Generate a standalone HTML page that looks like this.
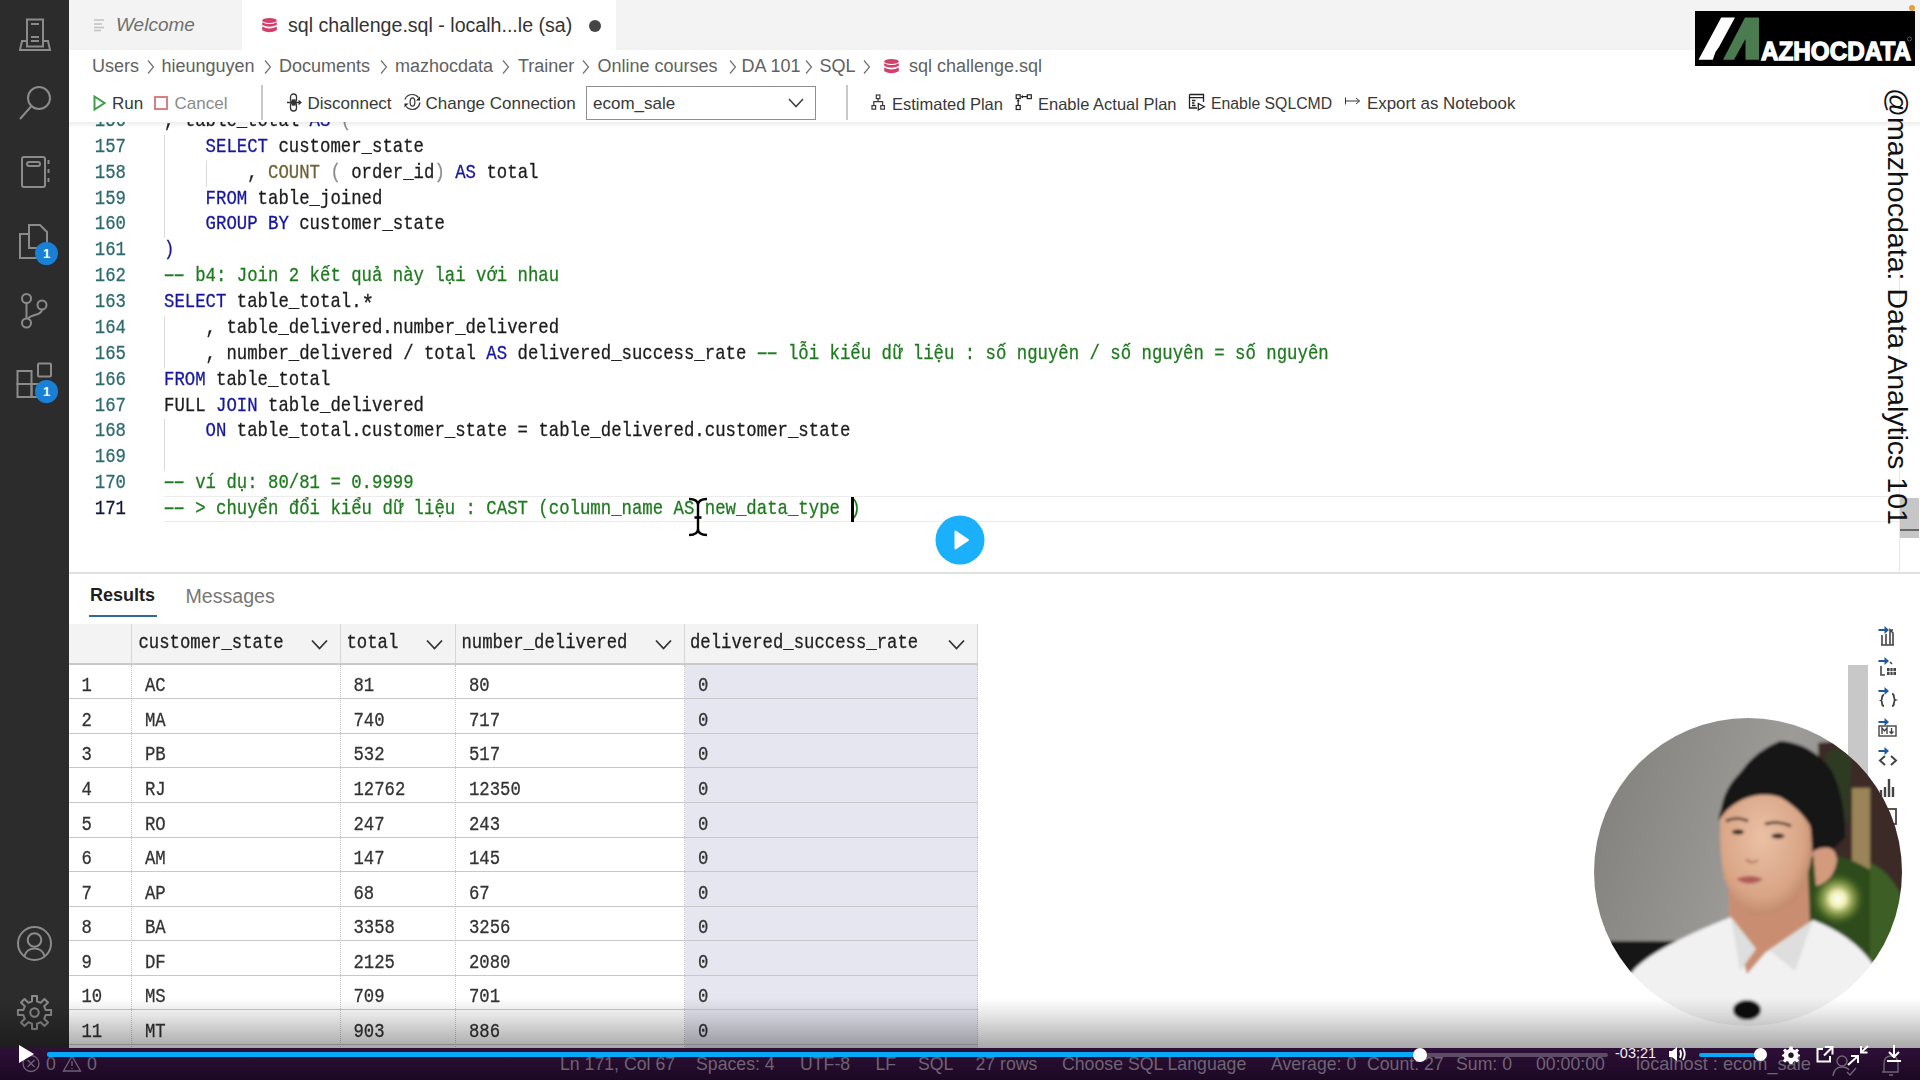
<!DOCTYPE html>
<html><head><meta charset="utf-8"><title>sql challenge</title>
<style>
*{box-sizing:border-box;margin:0;padding:0}
html,body{width:1920px;height:1080px;overflow:hidden;background:#fff}
body{position:relative;font-family:"Liberation Sans", sans-serif}
.a{position:absolute;white-space:pre}
.mono{font-family:"Liberation Mono", monospace;transform:scaleY(1.12);-webkit-text-stroke:0.25px currentColor}
.kw{color:#1616a0}
.fn{color:#6e6238}
.cm{color:#1f7a1f}
.tx{color:#1c1c1c}
.pg{color:#8c8c8c}
.dsh{display:inline-block;transform:scaleX(1.75)}
.ast{color:#1c1c1c;position:relative;top:4px;font-size:21px;line-height:1px}
</style></head><body>

<div class="a" style="left:0;top:0;width:69px;height:1048px;background:#2c2c2c"></div>
<svg class="a" style="left:0;top:0" width="69" height="1048" viewBox="0 0 69 1048" fill="none" stroke="#8b8b8b" stroke-width="2">
<!-- server -->
<rect x="27" y="19.5" width="16" height="27" />
<line x1="31" y1="24" x2="39" y2="24"/>
<line x1="31" y1="37" x2="39" y2="37"/>
<line x1="31" y1="41" x2="39" y2="41"/>
<path d="M27 41 H22 L20 50 H50 L48 41 H43"/>
<!-- search -->
<circle cx="39" cy="98" r="11"/>
<line x1="31.5" y1="106" x2="20" y2="119"/>
<!-- notebook -->
<rect x="22" y="157" width="23" height="30" rx="2"/>
<rect x="27" y="162" width="13" height="4" rx="2"/>
<line x1="48.5" y1="160" x2="48.5" y2="164"/>
<line x1="48.5" y1="169" x2="48.5" y2="173"/>
<line x1="48.5" y1="178" x2="48.5" y2="182"/>
<!-- files -->
<path d="M29 225 H40 L47 232 V248 H29 Z"/>
<path d="M29 234 H20 V258 H38 V248"/>
<!-- git -->
<circle cx="26.5" cy="298.5" r="4.5"/>
<circle cx="26.5" cy="323" r="4.5"/>
<circle cx="42" cy="305" r="4.5"/>
<line x1="26.5" y1="303" x2="26.5" y2="318.5"/>
<path d="M42 309.5 C42 316 30 314 28 319"/>
<!-- extensions -->
<rect x="17.5" y="371" width="14" height="13"/>
<rect x="17.5" y="384" width="14" height="13"/>
<rect x="31.5" y="384" width="14" height="13"/>
<rect x="38" y="363.5" width="13" height="13" rx="1"/>
<!-- account -->
<circle cx="34.5" cy="943.5" r="16.5"/>
<circle cx="34.5" cy="940" r="6.8"/>
<path d="M24.5 956 C27 946 42 946 44.5 956"/>
</svg>
<div class="a" style="left:35px;top:242.0px;width:23px;height:23px;border-radius:50%;background:#1a80d6;color:#fff;font:bold 13px 'Liberation Sans', sans-serif;text-align:center;line-height:23px">1</div>
<div class="a" style="left:35px;top:379.5px;width:23px;height:23px;border-radius:50%;background:#1a80d6;color:#fff;font:bold 13px 'Liberation Sans', sans-serif;text-align:center;line-height:23px">1</div>
<svg class="a" style="left:16px;top:994px" width="37" height="37" viewBox="0 0 37 37" fill="none" stroke="#8b8b8b" stroke-width="2" stroke-linejoin="round">
<path d="M16.01 7.27 L16.02 1.88 L20.98 1.88 L20.99 7.27 L24.68 8.80 L28.49 5.00 L32.00 8.51 L28.20 12.32 L29.73 16.01 L35.12 16.02 L35.12 20.98 L29.73 20.99 L28.20 24.68 L32.00 28.49 L28.49 32.00 L24.68 28.20 L20.99 29.73 L20.98 35.12 L16.02 35.12 L16.01 29.73 L12.32 28.20 L8.51 32.00 L5.00 28.49 L8.80 24.68 L7.27 20.99 L1.88 20.98 L1.88 16.02 L7.27 16.01 L8.80 12.32 L5.00 8.51 L8.51 5.00 L12.32 8.80 Z"/>
<circle cx="18.5" cy="18.5" r="4.2"/>
</svg>
<div class="a" style="left:164px;top:496px;width:1736px;height:26px;border-top:1.5px solid #ececec;border-bottom:1.5px solid #ececec"></div>
<div class="a" style="left:164px;top:134.82px;width:1px;height:103.48px;background:#d9d9d9"></div>
<div class="a" style="left:206px;top:160.69px;width:1px;height:25.87px;background:#d9d9d9"></div>
<div class="a" style="left:164px;top:315.90999999999997px;width:1px;height:51.74px;background:#d9d9d9"></div>
<div class="a" style="left:164px;top:419.39px;width:1px;height:51.74px;background:#d9d9d9"></div>
<div class="a mono" style="left:86px;top:108.94999999999999px;width:40px;text-align:right;font-size:17.33px;line-height:25.87px;color:#2e6a70">156</div>
<div class="a mono" style="left:164px;top:108.94999999999999px;font-size:17.33px;line-height:25.87px"><span class="tx">, table_total </span><span class="kw">AS</span><span class="tx"> </span><span class="pg">(</span></div>
<div class="a mono" style="left:86px;top:134.82px;width:40px;text-align:right;font-size:17.33px;line-height:25.87px;color:#2e6a70">157</div>
<div class="a mono" style="left:164px;top:134.82px;font-size:17.33px;line-height:25.87px"><span class="tx">    </span><span class="kw">SELECT</span><span class="tx"> customer_state</span></div>
<div class="a mono" style="left:86px;top:160.69px;width:40px;text-align:right;font-size:17.33px;line-height:25.87px;color:#2e6a70">158</div>
<div class="a mono" style="left:164px;top:160.69px;font-size:17.33px;line-height:25.87px"><span class="tx">        , </span><span class="fn">COUNT</span><span class="tx"> </span><span class="pg">(</span><span class="tx"> order_id</span><span class="pg">)</span><span class="tx"> </span><span class="kw">AS</span><span class="tx"> total</span></div>
<div class="a mono" style="left:86px;top:186.56px;width:40px;text-align:right;font-size:17.33px;line-height:25.87px;color:#2e6a70">159</div>
<div class="a mono" style="left:164px;top:186.56px;font-size:17.33px;line-height:25.87px"><span class="tx">    </span><span class="kw">FROM</span><span class="tx"> table_joined</span></div>
<div class="a mono" style="left:86px;top:212.43px;width:40px;text-align:right;font-size:17.33px;line-height:25.87px;color:#2e6a70">160</div>
<div class="a mono" style="left:164px;top:212.43px;font-size:17.33px;line-height:25.87px"><span class="tx">    </span><span class="kw">GROUP BY</span><span class="tx"> customer_state</span></div>
<div class="a mono" style="left:86px;top:238.3px;width:40px;text-align:right;font-size:17.33px;line-height:25.87px;color:#2e6a70">161</div>
<div class="a mono" style="left:164px;top:238.3px;font-size:17.33px;line-height:25.87px"><span class="kw">)</span></div>
<div class="a mono" style="left:86px;top:264.16999999999996px;width:40px;text-align:right;font-size:17.33px;line-height:25.87px;color:#2e6a70">162</div>
<div class="a mono" style="left:164px;top:264.16999999999996px;font-size:17.33px;line-height:25.87px"><span class="cm"><span class="dsh">-</span><span class="dsh">-</span> b4: Join 2 kết quả này lại với nhau</span></div>
<div class="a mono" style="left:86px;top:290.03999999999996px;width:40px;text-align:right;font-size:17.33px;line-height:25.87px;color:#2e6a70">163</div>
<div class="a mono" style="left:164px;top:290.03999999999996px;font-size:17.33px;line-height:25.87px"><span class="kw">SELECT</span><span class="tx"> table_total.</span><span class="ast">*</span></div>
<div class="a mono" style="left:86px;top:315.90999999999997px;width:40px;text-align:right;font-size:17.33px;line-height:25.87px;color:#2e6a70">164</div>
<div class="a mono" style="left:164px;top:315.90999999999997px;font-size:17.33px;line-height:25.87px"><span class="tx">    , table_delivered.number_delivered</span></div>
<div class="a mono" style="left:86px;top:341.78px;width:40px;text-align:right;font-size:17.33px;line-height:25.87px;color:#2e6a70">165</div>
<div class="a mono" style="left:164px;top:341.78px;font-size:17.33px;line-height:25.87px"><span class="tx">    , number_delivered / total </span><span class="kw">AS</span><span class="tx"> delivered_success_rate </span><span class="cm"><span class="dsh">-</span><span class="dsh">-</span> lỗi kiểu dữ liệu : số nguyên / số nguyên = số nguyên</span></div>
<div class="a mono" style="left:86px;top:367.65px;width:40px;text-align:right;font-size:17.33px;line-height:25.87px;color:#2e6a70">166</div>
<div class="a mono" style="left:164px;top:367.65px;font-size:17.33px;line-height:25.87px"><span class="kw">FROM</span><span class="tx"> table_total</span></div>
<div class="a mono" style="left:86px;top:393.52px;width:40px;text-align:right;font-size:17.33px;line-height:25.87px;color:#2e6a70">167</div>
<div class="a mono" style="left:164px;top:393.52px;font-size:17.33px;line-height:25.87px"><span class="tx">FULL </span><span class="kw">JOIN</span><span class="tx"> table_delivered</span></div>
<div class="a mono" style="left:86px;top:419.39px;width:40px;text-align:right;font-size:17.33px;line-height:25.87px;color:#2e6a70">168</div>
<div class="a mono" style="left:164px;top:419.39px;font-size:17.33px;line-height:25.87px"><span class="tx">    </span><span class="kw">ON</span><span class="tx"> table_total.customer_state = table_delivered.customer_state</span></div>
<div class="a mono" style="left:86px;top:445.26px;width:40px;text-align:right;font-size:17.33px;line-height:25.87px;color:#2e6a70">169</div>
<div class="a mono" style="left:164px;top:445.26px;font-size:17.33px;line-height:25.87px"></div>
<div class="a mono" style="left:86px;top:471.13px;width:40px;text-align:right;font-size:17.33px;line-height:25.87px;color:#2e6a70">170</div>
<div class="a mono" style="left:164px;top:471.13px;font-size:17.33px;line-height:25.87px"><span class="cm"><span class="dsh">-</span><span class="dsh">-</span> ví dụ: 80/81 = 0.9999</span></div>
<div class="a mono" style="left:86px;top:497.0px;width:40px;text-align:right;font-size:17.33px;line-height:25.87px;color:#101838">171</div>
<div class="a mono" style="left:164px;top:497.0px;font-size:17.33px;line-height:25.87px"><span class="cm"><span class="dsh">-</span><span class="dsh">-</span> &gt; chuyển đổi kiểu dữ liệu : CAST (column_name AS new_data_type )</span></div>
<div class="a" style="left:851px;top:496.5px;width:2.5px;height:25px;background:#000"></div>
<svg class="a" style="left:686px;top:496px" width="24" height="42" viewBox="0 0 24 42" fill="none" stroke="#000" stroke-width="2.4"><path d="M3 3 Q12 3 12 9 V33 Q12 39 3 39 M21 3 Q12 3 12 9 M12 33 Q12 39 21 39 M8.5 21.5 H15.5"/></svg>
<div class="a" style="left:69px;top:50px;width:1851px;height:72px;background:#fff"></div>
<div class="a" style="left:69px;top:0;width:1851px;height:50px;background:#f3f3f3"></div>
<div class="a" style="left:242px;top:0;width:374px;height:50px;background:#ffffff"></div>
<svg class="a" style="left:92px;top:18px" width="14" height="14" viewBox="0 0 14 14" stroke="#c4c4c4" stroke-width="1.6">
<line x1="2" y1="2" x2="12" y2="2"/><line x1="2" y1="6" x2="10" y2="6"/><line x1="2" y1="9.5" x2="12" y2="9.5"/><line x1="2" y1="12.5" x2="9" y2="12.5"/></svg>
<div class="a" style="left:116px;top:13px;font:italic 19px 'Liberation Sans', sans-serif;color:#6f6f6f;line-height:24px">Welcome</div>
<svg class="a" style="left:261.5px;top:17.5px" width="15" height="15" viewBox="0 0 15 15"><ellipse cx="7.5" cy="2.6" rx="7.3" ry="2.5" fill="#d23f6c"/><path d="M0.2 4.2 Q7.5 8 14.8 4.2 V7 Q7.5 10.6 0.2 7 Z" fill="#d23f6c"/><path d="M0.2 8.6 Q7.5 12.3 14.8 8.6 V12.2 Q7.5 16.2 0.2 12.2 Z" fill="#d23f6c"/></svg>
<div class="a" style="left:288px;top:13px;font:19.6px 'Liberation Sans', sans-serif;color:#333;line-height:24px">sql challenge.sql - localh...le (sa)</div>
<div class="a" style="left:589px;top:19.5px;width:12px;height:12px;border-radius:50%;background:#444"></div>
<div class="a" style="left:92px;top:55px;font:18px 'Liberation Sans', sans-serif;color:#616161;line-height:22px">Users</div>
<div class="a" style="left:161.5px;top:55px;font:18px 'Liberation Sans', sans-serif;color:#616161;line-height:22px">hieunguyen</div>
<div class="a" style="left:279px;top:55px;font:18px 'Liberation Sans', sans-serif;color:#616161;line-height:22px">Documents</div>
<div class="a" style="left:395px;top:55px;font:18px 'Liberation Sans', sans-serif;color:#616161;line-height:22px">mazhocdata</div>
<div class="a" style="left:518px;top:55px;font:18px 'Liberation Sans', sans-serif;color:#616161;line-height:22px">Trainer</div>
<div class="a" style="left:597.5px;top:55px;font:18px 'Liberation Sans', sans-serif;color:#616161;line-height:22px">Online courses</div>
<div class="a" style="left:741.5px;top:55px;font:18px 'Liberation Sans', sans-serif;color:#616161;line-height:22px">DA 101</div>
<div class="a" style="left:819.5px;top:55px;font:18px 'Liberation Sans', sans-serif;color:#616161;line-height:22px">SQL</div>
<div class="a" style="left:909px;top:55px;font:18px 'Liberation Sans', sans-serif;color:#616161;line-height:22px">sql challenge.sql</div>
<svg class="a" style="left:147.0px;top:59px" width="8" height="16" viewBox="0 0 8 16"><path d="M1 1.5 L6.5 8 L1 14.5" fill="none" stroke="#707070" stroke-width="1.2"/></svg>
<svg class="a" style="left:264.0px;top:59px" width="8" height="16" viewBox="0 0 8 16"><path d="M1 1.5 L6.5 8 L1 14.5" fill="none" stroke="#707070" stroke-width="1.2"/></svg>
<svg class="a" style="left:379.5px;top:59px" width="8" height="16" viewBox="0 0 8 16"><path d="M1 1.5 L6.5 8 L1 14.5" fill="none" stroke="#707070" stroke-width="1.2"/></svg>
<svg class="a" style="left:502.0px;top:59px" width="8" height="16" viewBox="0 0 8 16"><path d="M1 1.5 L6.5 8 L1 14.5" fill="none" stroke="#707070" stroke-width="1.2"/></svg>
<svg class="a" style="left:581.5px;top:59px" width="8" height="16" viewBox="0 0 8 16"><path d="M1 1.5 L6.5 8 L1 14.5" fill="none" stroke="#707070" stroke-width="1.2"/></svg>
<svg class="a" style="left:728.5px;top:59px" width="8" height="16" viewBox="0 0 8 16"><path d="M1 1.5 L6.5 8 L1 14.5" fill="none" stroke="#707070" stroke-width="1.2"/></svg>
<svg class="a" style="left:804.5px;top:59px" width="8" height="16" viewBox="0 0 8 16"><path d="M1 1.5 L6.5 8 L1 14.5" fill="none" stroke="#707070" stroke-width="1.2"/></svg>
<svg class="a" style="left:862.5px;top:59px" width="8" height="16" viewBox="0 0 8 16"><path d="M1 1.5 L6.5 8 L1 14.5" fill="none" stroke="#707070" stroke-width="1.2"/></svg>
<svg class="a" style="left:883.5px;top:58.5px" width="15" height="15" viewBox="0 0 15 15"><ellipse cx="7.5" cy="2.6" rx="7.3" ry="2.5" fill="#d23f6c"/><path d="M0.2 4.2 Q7.5 8 14.8 4.2 V7 Q7.5 10.6 0.2 7 Z" fill="#d23f6c"/><path d="M0.2 8.6 Q7.5 12.3 14.8 8.6 V12.2 Q7.5 16.2 0.2 12.2 Z" fill="#d23f6c"/></svg>
<div class="a" style="left:69px;top:122px;width:1851px;height:6px;background:linear-gradient(rgba(0,0,0,0.07),rgba(0,0,0,0))"></div>
<svg class="a" style="left:93px;top:95px" width="13" height="16" viewBox="0 0 13 16"><path d="M1.5 1.5 L11.5 8 L1.5 14.5 Z" fill="none" stroke="#3aa04a" stroke-width="2"/></svg>
<div class="a" style="left:112px;top:94px;font:17px 'Liberation Sans', sans-serif;color:#383838;line-height:20px">Run</div>
<div class="a" style="left:154px;top:95.5px;width:14px;height:14px;border:2px solid #d98080"></div>
<div class="a" style="left:174.5px;top:94px;font:17px 'Liberation Sans', sans-serif;color:#8a8a8a;line-height:20px">Cancel</div>
<div class="a" style="left:261px;top:85px;width:1.5px;height:35px;background:#c8c8c8"></div>
<svg class="a" style="left:286px;top:93px" width="16" height="20" viewBox="0 0 16 20" fill="none" stroke="#333" stroke-width="1.3"><rect x="4.5" y="1" width="6" height="8.5" rx="3"/><rect x="4.5" y="9.5" width="6" height="8.5" rx="3"/><path d="M1 9.5 H15 M12.5 7.5 L15 9.5 L12.5 11.5"/><rect x="6.5" y="7" width="2.5" height="5" fill="#333"/></svg>
<div class="a" style="left:307.5px;top:94px;font:17px 'Liberation Sans', sans-serif;color:#383838;line-height:20px">Disconnect</div>
<svg class="a" style="left:403px;top:93px" width="19" height="18" viewBox="0 0 19 18" fill="none" stroke="#333" stroke-width="1.2"><path d="M1.8 6.5 Q4 1.5 9.5 1.5 Q13 1.5 15.5 4.5 M17 9.5 Q15.5 16.5 9.5 16.5 Q5.5 16.5 3.2 13.5"/><path d="M17 3.5 V7.5 H13 Z M1.5 14.5 V10.5 H5.5 Z" fill="#222" stroke="none"/><ellipse cx="9.5" cy="9" rx="2.4" ry="4.2"/></svg>
<div class="a" style="left:425.5px;top:94px;font:17px 'Liberation Sans', sans-serif;color:#383838;line-height:20px">Change Connection</div>
<div class="a" style="left:586px;top:85.5px;width:230px;height:34px;border:1px solid #8f8f8f;background:#fff"></div>
<div class="a" style="left:593px;top:94px;font:17px 'Liberation Sans', sans-serif;color:#383838;line-height:20px">ecom_sale</div>
<svg class="a" style="left:788px;top:98px" width="16" height="10" viewBox="0 0 16 10"><path d="M1 1 L8 8.5 L15 1" fill="none" stroke="#444" stroke-width="1.6"/></svg>
<div class="a" style="left:846px;top:85px;width:1.5px;height:35px;background:#c8c8c8"></div>
<svg class="a" style="left:870px;top:94px" width="17" height="17" viewBox="0 0 17 17" fill="none" stroke="#3a3a3a" stroke-width="1.2"><rect x="6.3" y="1" width="3.6" height="3.6"/><rect x="2" y="11.6" width="3.6" height="3.6"/><rect x="10.8" y="11.6" width="3.6" height="3.6"/><path d="M8.1 4.6 V7.6 M3.8 11.6 V7.6 H12.6 V11.6"/></svg>
<div class="a" style="left:892px;top:94px;font:16.5px 'Liberation Sans', sans-serif;color:#383838;line-height:20px">Estimated Plan</div>
<svg class="a" style="left:1015px;top:93px" width="18" height="19" viewBox="0 0 18 19" fill="none" stroke="#222" stroke-width="1.2"><rect x="1.2" y="1.8" width="4" height="3.8"/><rect x="12.3" y="1.8" width="4" height="3.8"/><rect x="1.2" y="12.5" width="4" height="4"/><path d="M7.5 3.7 H12.3 M3.2 8 V12.5"/><path d="M5.6 3.7 L8 2 V5.4 Z M3.2 5.8 L1.6 8.2 H4.8 Z" fill="#222" stroke="none"/></svg>
<div class="a" style="left:1038px;top:94px;font:16.5px 'Liberation Sans', sans-serif;color:#383838;line-height:20px">Enable Actual Plan</div>
<svg class="a" style="left:1188px;top:93px" width="18" height="19" viewBox="0 0 18 19" fill="none" stroke="#222" stroke-width="1.3"><path d="M1.5 1.5 H15.5 V9 M1.5 1.5 V15 H9 M1.5 4.6 H15.5 M4 7.5 H7.5 M4 10 H6.5 M4 12.5 H7.5"/><path d="M10.3 10.5 L16.3 13.8 L10.3 17 Z" fill="#fff"/></svg>
<div class="a" style="left:1211px;top:94px;font:15.8px 'Liberation Sans', sans-serif;color:#383838;line-height:20px">Enable SQLCMD</div>
<svg class="a" style="left:1344px;top:96px" width="17" height="10" viewBox="0 0 17 10" fill="none" stroke="#333" stroke-width="1"><path d="M1.5 1.5 V8.5 M1.5 5 H15.5 M12 2 L15.5 5 L12 8"/></svg>
<div class="a" style="left:1367px;top:94px;font:16.9px 'Liberation Sans', sans-serif;color:#383838;line-height:20px">Export as Notebook</div>
<div class="a" style="left:1899px;top:122px;width:1px;height:450px;background:#e8e8e8"></div>
<div class="a" style="left:1899.5px;top:497.5px;width:19.5px;height:40px;background:#c6c6c6"></div>
<div class="a" style="left:1900px;top:529px;width:18.5px;height:2px;background:#666"></div>
<svg class="a" style="left:935px;top:515px" width="50" height="50" viewBox="0 0 50 50"><circle cx="25" cy="25" r="24.5" fill="#1ab0fb"/><path d="M20.5 16.5 L33 25 L20.5 33.5 Z" fill="#fff" stroke="#fff" stroke-width="2" stroke-linejoin="round"/></svg>
<div class="a" style="left:69px;top:572px;width:1851px;height:1.5px;background:#e0e0e0"></div>
<div class="a" style="left:90px;top:584px;font:bold 18px 'Liberation Sans', sans-serif;color:#1f1f1f;line-height:22px">Results</div>
<div class="a" style="left:89px;top:614.5px;width:68px;height:2.5px;background:#2f6a9a"></div>
<div class="a" style="left:185.5px;top:584.5px;font:19.6px 'Liberation Sans', sans-serif;color:#777;line-height:22px">Messages</div>
<div class="a" style="left:69px;top:624px;width:908.5px;height:39px;background:#f3f3f3"></div>
<div class="a" style="left:69px;top:663px;width:908.5px;height:2px;background:#c9c9c9"></div>
<div class="a" style="left:131.0px;top:624px;width:1px;height:39px;background:#d6d6d6"></div>
<div class="a" style="left:340.0px;top:624px;width:1px;height:39px;background:#d6d6d6"></div>
<div class="a" style="left:455.0px;top:624px;width:1px;height:39px;background:#d6d6d6"></div>
<div class="a" style="left:684.0px;top:624px;width:1px;height:39px;background:#d6d6d6"></div>
<div class="a" style="left:977.0px;top:624px;width:1px;height:39px;background:#d6d6d6"></div>
<div class="a mono" style="left:138.5px;top:631px;font-size:17.3px;line-height:26px;color:#1f1f1f">customer_state</div>
<svg class="a" style="left:311px;top:639px" width="17" height="11" viewBox="0 0 17 11"><path d="M1 1.5 L8.5 9.5 L16 1.5" fill="none" stroke="#333" stroke-width="1.8"/></svg>
<div class="a mono" style="left:346.5px;top:631px;font-size:17.3px;line-height:26px;color:#1f1f1f">total</div>
<svg class="a" style="left:426px;top:639px" width="17" height="11" viewBox="0 0 17 11"><path d="M1 1.5 L8.5 9.5 L16 1.5" fill="none" stroke="#333" stroke-width="1.8"/></svg>
<div class="a mono" style="left:461.5px;top:631px;font-size:17.3px;line-height:26px;color:#1f1f1f">number_delivered</div>
<svg class="a" style="left:655px;top:639px" width="17" height="11" viewBox="0 0 17 11"><path d="M1 1.5 L8.5 9.5 L16 1.5" fill="none" stroke="#333" stroke-width="1.8"/></svg>
<div class="a mono" style="left:690px;top:631px;font-size:17.3px;line-height:26px;color:#1f1f1f">delivered_success_rate</div>
<svg class="a" style="left:948px;top:639px" width="17" height="11" viewBox="0 0 17 11"><path d="M1 1.5 L8.5 9.5 L16 1.5" fill="none" stroke="#333" stroke-width="1.8"/></svg>
<div class="a" style="left:684.5px;top:665px;width:293px;height:390px;background:#e6e6f1"></div>
<div class="a" style="left:69px;top:698px;width:908.5px;height:1px;background:#c8c8c8"></div>
<div class="a mono" style="left:81.5px;top:674.22px;font-size:17.3px;line-height:26px;color:#333">1</div>
<div class="a mono" style="left:145px;top:674.22px;font-size:17.3px;line-height:26px;color:#333">AC</div>
<div class="a mono" style="left:353.5px;top:674.22px;font-size:17.3px;line-height:26px;color:#333">81</div>
<div class="a mono" style="left:469px;top:674.22px;font-size:17.3px;line-height:26px;color:#333">80</div>
<div class="a mono" style="left:698px;top:674.22px;font-size:17.3px;line-height:26px;color:#333">0</div>
<div class="a" style="left:69px;top:733px;width:908.5px;height:1px;background:#c8c8c8"></div>
<div class="a mono" style="left:81.5px;top:708.8000000000001px;font-size:17.3px;line-height:26px;color:#333">2</div>
<div class="a mono" style="left:145px;top:708.8000000000001px;font-size:17.3px;line-height:26px;color:#333">MA</div>
<div class="a mono" style="left:353.5px;top:708.8000000000001px;font-size:17.3px;line-height:26px;color:#333">740</div>
<div class="a mono" style="left:469px;top:708.8000000000001px;font-size:17.3px;line-height:26px;color:#333">717</div>
<div class="a mono" style="left:698px;top:708.8000000000001px;font-size:17.3px;line-height:26px;color:#333">0</div>
<div class="a" style="left:69px;top:767px;width:908.5px;height:1px;background:#c8c8c8"></div>
<div class="a mono" style="left:81.5px;top:743.38px;font-size:17.3px;line-height:26px;color:#333">3</div>
<div class="a mono" style="left:145px;top:743.38px;font-size:17.3px;line-height:26px;color:#333">PB</div>
<div class="a mono" style="left:353.5px;top:743.38px;font-size:17.3px;line-height:26px;color:#333">532</div>
<div class="a mono" style="left:469px;top:743.38px;font-size:17.3px;line-height:26px;color:#333">517</div>
<div class="a mono" style="left:698px;top:743.38px;font-size:17.3px;line-height:26px;color:#333">0</div>
<div class="a" style="left:69px;top:802px;width:908.5px;height:1px;background:#c8c8c8"></div>
<div class="a mono" style="left:81.5px;top:777.96px;font-size:17.3px;line-height:26px;color:#333">4</div>
<div class="a mono" style="left:145px;top:777.96px;font-size:17.3px;line-height:26px;color:#333">RJ</div>
<div class="a mono" style="left:353.5px;top:777.96px;font-size:17.3px;line-height:26px;color:#333">12762</div>
<div class="a mono" style="left:469px;top:777.96px;font-size:17.3px;line-height:26px;color:#333">12350</div>
<div class="a mono" style="left:698px;top:777.96px;font-size:17.3px;line-height:26px;color:#333">0</div>
<div class="a" style="left:69px;top:837px;width:908.5px;height:1px;background:#c8c8c8"></div>
<div class="a mono" style="left:81.5px;top:812.54px;font-size:17.3px;line-height:26px;color:#333">5</div>
<div class="a mono" style="left:145px;top:812.54px;font-size:17.3px;line-height:26px;color:#333">RO</div>
<div class="a mono" style="left:353.5px;top:812.54px;font-size:17.3px;line-height:26px;color:#333">247</div>
<div class="a mono" style="left:469px;top:812.54px;font-size:17.3px;line-height:26px;color:#333">243</div>
<div class="a mono" style="left:698px;top:812.54px;font-size:17.3px;line-height:26px;color:#333">0</div>
<div class="a" style="left:69px;top:871px;width:908.5px;height:1px;background:#c8c8c8"></div>
<div class="a mono" style="left:81.5px;top:847.12px;font-size:17.3px;line-height:26px;color:#333">6</div>
<div class="a mono" style="left:145px;top:847.12px;font-size:17.3px;line-height:26px;color:#333">AM</div>
<div class="a mono" style="left:353.5px;top:847.12px;font-size:17.3px;line-height:26px;color:#333">147</div>
<div class="a mono" style="left:469px;top:847.12px;font-size:17.3px;line-height:26px;color:#333">145</div>
<div class="a mono" style="left:698px;top:847.12px;font-size:17.3px;line-height:26px;color:#333">0</div>
<div class="a" style="left:69px;top:906px;width:908.5px;height:1px;background:#c8c8c8"></div>
<div class="a mono" style="left:81.5px;top:881.7px;font-size:17.3px;line-height:26px;color:#333">7</div>
<div class="a mono" style="left:145px;top:881.7px;font-size:17.3px;line-height:26px;color:#333">AP</div>
<div class="a mono" style="left:353.5px;top:881.7px;font-size:17.3px;line-height:26px;color:#333">68</div>
<div class="a mono" style="left:469px;top:881.7px;font-size:17.3px;line-height:26px;color:#333">67</div>
<div class="a mono" style="left:698px;top:881.7px;font-size:17.3px;line-height:26px;color:#333">0</div>
<div class="a" style="left:69px;top:940px;width:908.5px;height:1px;background:#c8c8c8"></div>
<div class="a mono" style="left:81.5px;top:916.28px;font-size:17.3px;line-height:26px;color:#333">8</div>
<div class="a mono" style="left:145px;top:916.28px;font-size:17.3px;line-height:26px;color:#333">BA</div>
<div class="a mono" style="left:353.5px;top:916.28px;font-size:17.3px;line-height:26px;color:#333">3358</div>
<div class="a mono" style="left:469px;top:916.28px;font-size:17.3px;line-height:26px;color:#333">3256</div>
<div class="a mono" style="left:698px;top:916.28px;font-size:17.3px;line-height:26px;color:#333">0</div>
<div class="a" style="left:69px;top:975px;width:908.5px;height:1px;background:#c8c8c8"></div>
<div class="a mono" style="left:81.5px;top:950.86px;font-size:17.3px;line-height:26px;color:#333">9</div>
<div class="a mono" style="left:145px;top:950.86px;font-size:17.3px;line-height:26px;color:#333">DF</div>
<div class="a mono" style="left:353.5px;top:950.86px;font-size:17.3px;line-height:26px;color:#333">2125</div>
<div class="a mono" style="left:469px;top:950.86px;font-size:17.3px;line-height:26px;color:#333">2080</div>
<div class="a mono" style="left:698px;top:950.86px;font-size:17.3px;line-height:26px;color:#333">0</div>
<div class="a" style="left:69px;top:1009px;width:908.5px;height:1px;background:#c8c8c8"></div>
<div class="a mono" style="left:81.5px;top:985.44px;font-size:17.3px;line-height:26px;color:#333">10</div>
<div class="a mono" style="left:145px;top:985.44px;font-size:17.3px;line-height:26px;color:#333">MS</div>
<div class="a mono" style="left:353.5px;top:985.44px;font-size:17.3px;line-height:26px;color:#333">709</div>
<div class="a mono" style="left:469px;top:985.44px;font-size:17.3px;line-height:26px;color:#333">701</div>
<div class="a mono" style="left:698px;top:985.44px;font-size:17.3px;line-height:26px;color:#333">0</div>
<div class="a" style="left:69px;top:1044px;width:908.5px;height:1px;background:#c8c8c8"></div>
<div class="a mono" style="left:81.5px;top:1020.02px;font-size:17.3px;line-height:26px;color:#333">11</div>
<div class="a mono" style="left:145px;top:1020.02px;font-size:17.3px;line-height:26px;color:#333">MT</div>
<div class="a mono" style="left:353.5px;top:1020.02px;font-size:17.3px;line-height:26px;color:#333">903</div>
<div class="a mono" style="left:469px;top:1020.02px;font-size:17.3px;line-height:26px;color:#333">886</div>
<div class="a mono" style="left:698px;top:1020.02px;font-size:17.3px;line-height:26px;color:#333">0</div>
<div class="a" style="left:69px;top:1079px;width:908.5px;height:1px;background:#c8c8c8"></div>
<div class="a mono" style="left:81.5px;top:1054.6px;font-size:17.3px;line-height:26px;color:#333">12</div>
<div class="a mono" style="left:145px;top:1054.6px;font-size:17.3px;line-height:26px;color:#333">MG</div>
<div class="a mono" style="left:353.5px;top:1054.6px;font-size:17.3px;line-height:26px;color:#333">11635</div>
<div class="a mono" style="left:469px;top:1054.6px;font-size:17.3px;line-height:26px;color:#333">11354</div>
<div class="a mono" style="left:698px;top:1054.6px;font-size:17.3px;line-height:26px;color:#333">0</div>
<div class="a" style="left:131.0px;top:665px;width:0;height:390px;border-left:1px dotted #c4c4c4"></div>
<div class="a" style="left:340.0px;top:665px;width:0;height:390px;border-left:1px dotted #c4c4c4"></div>
<div class="a" style="left:455.0px;top:665px;width:0;height:390px;border-left:1px dotted #c4c4c4"></div>
<div class="a" style="left:684.0px;top:665px;width:0;height:390px;border-left:1px dotted #c4c4c4"></div>
<div class="a" style="left:977.0px;top:665px;width:0;height:390px;border-left:1px dotted #c4c4c4"></div>
<div class="a" style="left:1848px;top:665px;width:20px;height:290px;background:#c8c8c8"></div>
<svg class="a" style="left:1877px;top:624px" width="28" height="24" viewBox="0 0 28 24" fill="none">
<path d="M1.5 5 H7.5 V2 L12 6 L7.5 10 V7 H1.5 Z" fill="#1f5a9c"/><path d="M5 21 V11 M9 21 V10 M13 21 V6 L16 9 V21 M4 21 H17 M13 6 H16" stroke="#444" stroke-width="1.6"/></svg>
<svg class="a" style="left:1877px;top:655px" width="28" height="24" viewBox="0 0 28 24" fill="none">
<path d="M1.5 5 H7.5 V2 L12 6 L7.5 10 V7 H1.5 Z" fill="#1f5a9c"/><path d="M4 11 V20 H8 M13 7 L15 9" stroke="#444" stroke-width="1.6"/><rect x="10" y="13" width="9" height="7" fill="#444"/><path d="M13 13 V20 M16 13 V20 M10 16.5 H19" stroke="#fff" stroke-width="0.8"/></svg>
<svg class="a" style="left:1877px;top:685px" width="28" height="24" viewBox="0 0 28 24" fill="none">
<path d="M1.5 5 H7.5 V2 L12 6 L7.5 10 V7 H1.5 Z" fill="#1f5a9c"/><path d="M7 10 Q5 10 5 13 Q5 15 4 15.5 Q5 16 5 18 Q5 21 7 21 M15 9 Q17 9 17 12 Q17 14.5 18.5 15 Q17 15.5 17 18 Q17 21 15 21" stroke="#444" stroke-width="1.8"/></svg>
<svg class="a" style="left:1877px;top:716px" width="28" height="24" viewBox="0 0 28 24" fill="none">
<path d="M1.5 5 H7.5 V2 L12 6 L7.5 10 V7 H1.5 Z" fill="#1f5a9c"/><rect x="2" y="10" width="17" height="10" stroke="#444" stroke-width="1.4"/><path d="M5 18 V12 L7.5 15 L10 12 V18 M14.5 12 V17 M12.5 15.5 L14.5 17.5 L16.5 15.5" stroke="#444" stroke-width="1.4"/></svg>
<svg class="a" style="left:1877px;top:745px" width="28" height="24" viewBox="0 0 28 24" fill="none">
<path d="M1.5 5 H7.5 V2 L12 6 L7.5 10 V7 H1.5 Z" fill="#1f5a9c"/><path d="M8 11 L3 15.5 L8 20 M14 11 L19 15.5 L14 20" stroke="#444" stroke-width="2"/></svg>
<svg class="a" style="left:1876px;top:775px" width="28" height="24" viewBox="0 0 28 24" fill="none"><path d="M5 22 V15 M9 22 V12 M13 22 V4 M17 22 V12" stroke="#444" stroke-width="2.4"/></svg>
<svg class="a" style="left:1876px;top:805px" width="26" height="20" viewBox="0 0 26 20" fill="none"><rect x="3" y="4" width="17" height="15" stroke="#444" stroke-width="1.8"/></svg>
<svg class="a" style="left:1695px;top:11px" width="220" height="55" viewBox="0 0 220 55">
<rect width="220" height="55" fill="#000"/>
<path d="M3.5 48.7 L26.2 6.5 H40 L24 36 L20.5 41 L17.8 48.7 Z" fill="#fff"/>
<path d="M28 48.7 L50 6.5 H64 V48.7 H50.5 V28 L39 48.7 Z" fill="#4a7c50"/>
<text x="66" y="48.7" font-family="Liberation Sans" font-weight="bold" font-size="25" fill="#fff" stroke="#fff" stroke-width="1.3" textLength="150" lengthAdjust="spacingAndGlyphs">AZHOCDATA</text>
<circle cx="214.5" cy="28" r="2" fill="none" stroke="#888" stroke-width="0.6"/>
</svg>
<div class="a" style="left:1909px;top:4.5px;width:6px;height:6px;border-radius:50%;background:#e0a040"></div>
<svg class="a" style="left:1876px;top:80px" width="40" height="450" viewBox="0 0 40 450">
<text transform="translate(12,8) rotate(90)" font-family="Liberation Sans" font-size="28.5" fill="#111" textLength="437" lengthAdjust="spacingAndGlyphs">@mazhocdata<tspan>: Data Analytics 101</tspan></text>
</svg>
<svg class="a" style="left:1590px;top:713px" width="318" height="318" viewBox="0 0 318 318">
<defs>
<clipPath id="cc"><circle cx="158" cy="159" r="154"/></clipPath>
<linearGradient id="wall" x1="0" y1="0" x2="1" y2="0.3"><stop offset="0" stop-color="#7e7d79"/><stop offset="0.6" stop-color="#9c9b97"/><stop offset="1" stop-color="#8a8984"/></linearGradient>
<radialGradient id="skin" cx="0.45" cy="0.4" r="0.65"><stop offset="0" stop-color="#eac0a4"/><stop offset="0.7" stop-color="#d9a486"/><stop offset="1" stop-color="#b98064"/></radialGradient>
<radialGradient id="lamp" cx="0.5" cy="0.5" r="0.5"><stop offset="0" stop-color="#ffffff"/><stop offset="0.3" stop-color="#f0f0b0"/><stop offset="0.7" stop-color="#8aa040" stop-opacity="0.6"/><stop offset="1" stop-color="#4a6a20" stop-opacity="0"/></radialGradient>
<filter id="bl" x="-5%" y="-5%" width="110%" height="110%"><feGaussianBlur stdDeviation="1.6"/></filter>
</defs>
<g clip-path="url(#cc)"><g filter="url(#bl)">
<rect width="318" height="318" fill="url(#wall)"/>
<path d="M228 30 L330 20 L330 330 L240 330 Z" fill="#3a2b26"/>
<path d="M236 40 Q250 30 262 45 L258 110 L232 120 Z" fill="#2d3a22"/>
<rect x="262" y="75" width="18" height="145" fill="#9a8458"/>
<path d="M205 150 Q240 130 285 160 L300 210 L290 250 L230 250 L205 220 Z" fill="#2f4c1e"/>
<path d="M280 150 Q305 160 318 200 L318 260 L280 250 Z" fill="#3e5e26"/>
<circle cx="248" cy="186" r="26" fill="url(#lamp)"/>
<rect x="0" y="228" width="95" height="40" fill="#141414"/>
<path d="M138 165 L218 160 L222 265 L141 265 Z" fill="#c98e72"/>
<path d="M130 113 Q129 80 150 60 Q165 38 190 28 Q222 30 242 58 Q256 88 255 125 L243 136 L222 140 Q220 110 214 92 L130 120 Z" fill="#121212"/>
<path d="M130 113 Q130 140 134 165 Q141 185 160 201 Q179 207 204 189 Q218 170 222 140 Q222 110 216 91 Q190 78 166 72 Q141 80 130 103 Z" fill="url(#skin)"/>
<path d="M223 138 Q245 128 247 147 Q244 168 226 173 Z" fill="#d39a7e"/>
<path d="M128 108 Q135 70 166 68 Q195 70 218 88 L224 120 Q214 98 190 84 Q160 76 136 98 Z" fill="#121212"/>
<path d="M136 108 Q147 103 158 108 M175 111 Q188 107 201 113" stroke="#3a2418" stroke-width="2.5" fill="none"/><ellipse cx="148" cy="119" rx="6" ry="2.6" fill="#2a1a14"/><ellipse cx="188" cy="123" rx="6.5" ry="2.6" fill="#2a1a14"/>
<path d="M156 146 Q161 152 168 147" stroke="#b07860" stroke-width="2" fill="none"/>
<path d="M146 166 Q160 160 173 166 Q160 175 146 166 Z" fill="#b05a58"/>
<path d="M37 318 L40 262 Q55 238 141 204 L157 261 L175 240 L223 207 Q262 222 282 250 L300 318 Z" fill="#f1f1f1"/>
<path d="M141 204 L150 258 L166 236 Z M223 207 L205 258 L180 238 Z" fill="#dedede"/>
<ellipse cx="157" cy="297" rx="14" ry="10" fill="#111"/>
</g></g>
</svg>
<div class="a" style="left:0;top:998px;width:1920px;height:50px;background:linear-gradient(rgba(0,0,0,0),rgba(0,0,0,0.1) 35%,rgba(0,0,0,0.34))"></div>
<div class="a" style="left:0;top:1048px;width:1920px;height:32px;background:linear-gradient(#2e1038,#1c0824)"></div>
<div class="a" style="left:46px;top:1053px;font:17.7px 'Liberation Sans', sans-serif;color:#6e6474;line-height:22px">0</div>
<div class="a" style="left:87px;top:1053px;font:17.7px 'Liberation Sans', sans-serif;color:#6e6474;line-height:22px">0</div>
<div class="a" style="left:560px;top:1053px;font:17.7px 'Liberation Sans', sans-serif;color:#6e6474;line-height:22px">Ln 171, Col 67</div>
<div class="a" style="left:696px;top:1053px;font:17.7px 'Liberation Sans', sans-serif;color:#6e6474;line-height:22px">Spaces: 4</div>
<div class="a" style="left:800px;top:1053px;font:17.7px 'Liberation Sans', sans-serif;color:#6e6474;line-height:22px">UTF-8</div>
<div class="a" style="left:875.5px;top:1053px;font:17.7px 'Liberation Sans', sans-serif;color:#6e6474;line-height:22px">LF</div>
<div class="a" style="left:918px;top:1053px;font:17.7px 'Liberation Sans', sans-serif;color:#6e6474;line-height:22px">SQL</div>
<div class="a" style="left:975.5px;top:1053px;font:17.7px 'Liberation Sans', sans-serif;color:#6e6474;line-height:22px">27 rows</div>
<div class="a" style="left:1062px;top:1053px;font:17.7px 'Liberation Sans', sans-serif;color:#6e6474;line-height:22px">Choose SQL Language</div>
<div class="a" style="left:1271px;top:1053px;font:17.7px 'Liberation Sans', sans-serif;color:#6e6474;line-height:22px">Average: 0</div>
<div class="a" style="left:1367px;top:1053px;font:17.7px 'Liberation Sans', sans-serif;color:#6e6474;line-height:22px">Count: 27</div>
<div class="a" style="left:1456px;top:1053px;font:17.7px 'Liberation Sans', sans-serif;color:#6e6474;line-height:22px">Sum: 0</div>
<div class="a" style="left:1536px;top:1053px;font:17.7px 'Liberation Sans', sans-serif;color:#6e6474;line-height:22px">00:00:00</div>
<div class="a" style="left:1636px;top:1053px;font:18.2px 'Liberation Sans', sans-serif;color:#6e6474;line-height:22px">localhost : ecom_sale</div>
<svg class="a" style="left:20px;top:1054px" width="90" height="20" viewBox="0 0 90 20" fill="none" stroke="#6e6474" stroke-width="1.3">
<circle cx="11" cy="9.5" r="8"/><path d="M7.5 6 L14.5 13 M14.5 6 L7.5 13"/>
<path d="M52 2 L60.5 17 H43.5 Z M52 7 V12 M52 14 V15"/></svg>
<svg class="a" style="left:1831px;top:1052px" width="80" height="26" viewBox="0 0 80 26" fill="none" stroke="#6e6474" stroke-width="1.4">
<circle cx="11" cy="9" r="5"/><path d="M2 24 Q3 15 11 15 Q16 15 18 18"/><path d="M16 20 L19 23 L25 16"/>
<path d="M53 20 V12 Q53 4 60 4 Q67 4 67 12 V20 H51 M58 23 H62"/></svg>
<div class="a" style="left:1420px;top:1052.5px;width:188px;height:4.5px;background:rgba(160,150,165,0.45);border-radius:2px"></div>
<div class="a" style="left:47px;top:1052px;width:1373px;height:5px;background:#08a8f8;border-radius:2px"></div>
<div class="a" style="left:1412.5px;top:1047.5px;width:14px;height:14px;border-radius:50%;background:#fff"></div>
<svg class="a" style="left:18px;top:1044px" width="17" height="20" viewBox="0 0 17 20"><path d="M1 1 L16 10 L1 19 Z" fill="#fff"/></svg>
<div class="a" style="left:1615px;top:1044px;font:14.5px 'Liberation Sans', sans-serif;color:#f0f0f0;line-height:18px">-03:21</div>
<svg class="a" style="left:1668px;top:1046px" width="20" height="16" viewBox="0 0 20 16"><path d="M1 5 H4 L9 1 V15 L4 11 H1 Z" fill="#fff"/><path d="M12 4 Q14 8 12 12 M15 2 Q18.5 8 15 14" fill="none" stroke="#fff" stroke-width="1.8"/></svg>
<div class="a" style="left:1699px;top:1052.5px;width:62px;height:4.5px;background:#08a8f8;border-radius:2px"></div>
<div class="a" style="left:1754px;top:1048px;width:13px;height:13px;border-radius:50%;background:#fff"></div>
<svg class="a" style="left:1782px;top:1046px" width="18" height="18" viewBox="0 0 18 18"><path d="M7.5 0.5 H10.5 L11 3 L13 4 L15 2.5 L17 4.5 L15.5 6.5 L16.3 8.2 L18 8.8 V10.2 L16.3 10.8 L15.5 12.5 L17 14.5 L15 16.5 L13 15 L11 16 L10.5 18 H7.5 L7 16 L5 15 L3 16.5 L1 14.5 L2.5 12.5 L1.7 10.8 L0 10.2 V8.8 L1.7 8.2 L2.5 6.5 L1 4.5 L3 2.5 L5 4 L7 3 Z" fill="#fff"/><circle cx="9" cy="9.3" r="2.7" fill="#2a0e33"/></svg>
<svg class="a" style="left:1816px;top:1046px" width="18" height="17" viewBox="0 0 18 17" fill="none" stroke="#fff" stroke-width="2"><path d="M7 3 H1.5 V15.5 H14 V10 M9 1 H16.5 V8.5 M16.5 1 L8 9.5"/></svg>
<svg class="a" style="left:1838px;top:1043px" width="34" height="30" viewBox="0 0 34 30" fill="none" stroke="#fff" stroke-width="2"><path d="M30 3 L23 9.5 M23 3 V9.5 H29.5 M10 22 L20 13 M13 13 H20 V20"/></svg>
<svg class="a" style="left:1886px;top:1044px" width="16" height="20" viewBox="0 0 16 20" fill="none" stroke="#fff" stroke-width="2"><path d="M8 1 V13 M3 8 L8 13 L13 8 M1 17 H15"/></svg>
</body></html>
